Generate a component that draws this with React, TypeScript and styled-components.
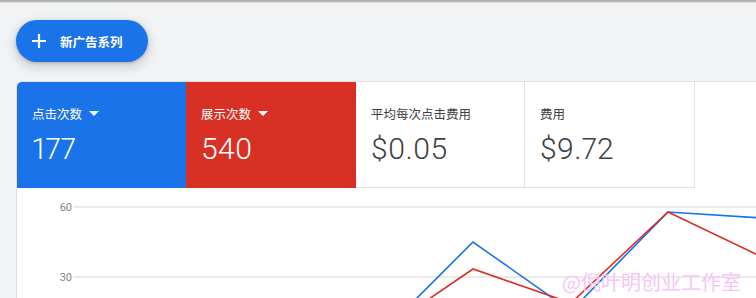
import React from 'react'
import styled, { createGlobalStyle } from 'styled-components'

const GlobalStyle = createGlobalStyle`
  html, body {
    margin: 0;
    padding: 0;
    background: #f1f3f4;
    overflow: hidden;
  }
  body {
    font-family: Roboto, 'Noto Sans CJK SC', sans-serif;
  }
`

type Metric = {
  label: string
  value: string
  tone?: 'blue' | 'red'
  dropdown?: boolean
}

const metrics: Metric[] = [
  { label: '点击次数', value: '177', tone: 'blue', dropdown: true },
  { label: '展示次数', value: '540', tone: 'red', dropdown: true },
  { label: '平均每次点击费用', value: '$0.05' },
  { label: '费用', value: '$9.72' },
]

const toneColor = {
  blue: '#1a73e8',
  red: '#d93025',
}

const Page = styled.div`
  width: 756px;
  height: 298px;
  position: relative;
  overflow: hidden;
`

const TopEdge = styled.div`
  height: 3px;
  background: linear-gradient(#c8c8c8 0, #9a9a9a 1px, #d0d0d0 2px, #eceeef 3px);
`

const Content = styled.div`
  padding: 17px 0 0 16px;
  display: flex;
  flex-direction: column;
  align-items: flex-start;
`

const CreateButton = styled.button`
  display: flex;
  align-items: center;
  gap: 14px;
  height: 42px;
  width: 132px;
  padding: 0 0 0 16px;
  border: none;
  border-radius: 21px;
  background: #1a73e8;
  color: #fff;
  font-family: 'Noto Sans CJK SC', sans-serif;
  font-size: 12.5px;
  font-weight: 700;
  box-shadow: 0 1px 3px rgba(60, 64, 67, 0.3), 0 4px 8px 3px rgba(60, 64, 67, 0.15);
  cursor: pointer;
`

const Card = styled.div`
  margin-top: 19px;
  align-self: stretch;
  background: #fff;
  border-top: 1px solid #e0e0e0;
  border-left: 1px solid #e0e0e0;
  border-top-left-radius: 6px;
  overflow: hidden;
  position: relative;
`

const MetricRow = styled.div`
  display: grid;
  grid-template-columns: 169px 170px 169px 170px;
`

const Tile = styled.div<{ $tone?: 'blue' | 'red' }>`
  height: 106px;
  box-sizing: border-box;
  padding: 21px 15px 0;
  background: ${({ $tone }) => ($tone ? toneColor[$tone] : '#fff')};
  color: ${({ $tone }) => ($tone ? '#fff' : '#3c4043')};
  border-right: 1px solid ${({ $tone }) => ($tone ? 'transparent' : '#e3e3e3')};
  border-bottom: 1px solid ${({ $tone }) => ($tone ? 'transparent' : '#e3e3e3')};
`

const Label = styled.div<{ $light?: boolean }>`
  display: flex;
  align-items: center;
  gap: 7px;
  height: 20px;
  font-family: 'Noto Sans CJK SC', sans-serif;
  font-size: 12.5px;
  color: ${({ $light }) => ($light ? '#fff' : '#3c4043')};
`

const Caret = styled.span`
  width: 0;
  height: 0;
  border-left: 5px solid transparent;
  border-right: 5px solid transparent;
  border-top: 5px solid #fff;
  margin-top: 1px;
`

const Value = styled.div`
  margin-top: 8px;
  font-family: Roboto, sans-serif;
  font-size: 30px;
  font-weight: 300;
  font-variant-numeric: proportional-nums;
  line-height: 36px;
  letter-spacing: 0.3px;
`

const Chart = styled.svg`
  display: block;
  width: 740px;
  height: 140px;
`

const Watermark = styled.div`
  position: absolute;
  left: 562px;
  top: 267px;
  font-family: 'Noto Sans CJK SC', sans-serif;
  font-size: 20px;
  color: #f6c6f4;
  white-space: nowrap;
`

const PlusIcon = () => (
  <svg width="14" height="14" viewBox="0 0 14 14">
    <path d="M7 0v14M0 7h14" stroke="#fff" strokeWidth="2.2" />
  </svg>
)

const App: React.FC = () => {
  return (
    <Page>
      <GlobalStyle />
      <TopEdge />
      <Content>
        <CreateButton>
          <PlusIcon />
          新广告系列
        </CreateButton>
        <Card>
          <MetricRow>
            {metrics.map((m) => (
              <Tile key={m.label} $tone={m.tone}>
                <Label $light={!!m.tone}>
                  {m.label}
                  {m.dropdown && <Caret />}
                </Label>
                <Value>{m.value}</Value>
              </Tile>
            ))}
          </MetricRow>
          <Chart viewBox="0 0 740 140">
            <line x1="56" y1="19" x2="740" y2="19" stroke="#e4e4e4" strokeWidth="1.5" />
            <line x1="56" y1="89" x2="740" y2="89" stroke="#e4e4e4" strokeWidth="1.5" />
            <text x="55" y="23" textAnchor="end" fontSize="11" fill="#80868b" fontFamily="Roboto, sans-serif">
              60
            </text>
            <text x="55" y="93" textAnchor="end" fontSize="11" fill="#80868b" fontFamily="Roboto, sans-serif">
              30
            </text>
            <polyline
              points="359,151 456,54 554,123 651,24 745,30"
              fill="none"
              stroke="#1a73e8"
              strokeWidth="1.6"
            />
            <polyline
              points="368,141 456,81 554,115 651,24 745,69"
              fill="none"
              stroke="#d93025"
              strokeWidth="1.6"
            />
          </Chart>
        </Card>
      </Content>
      <Watermark>@倪叶明创业工作室</Watermark>
    </Page>
  )
}

export default App
